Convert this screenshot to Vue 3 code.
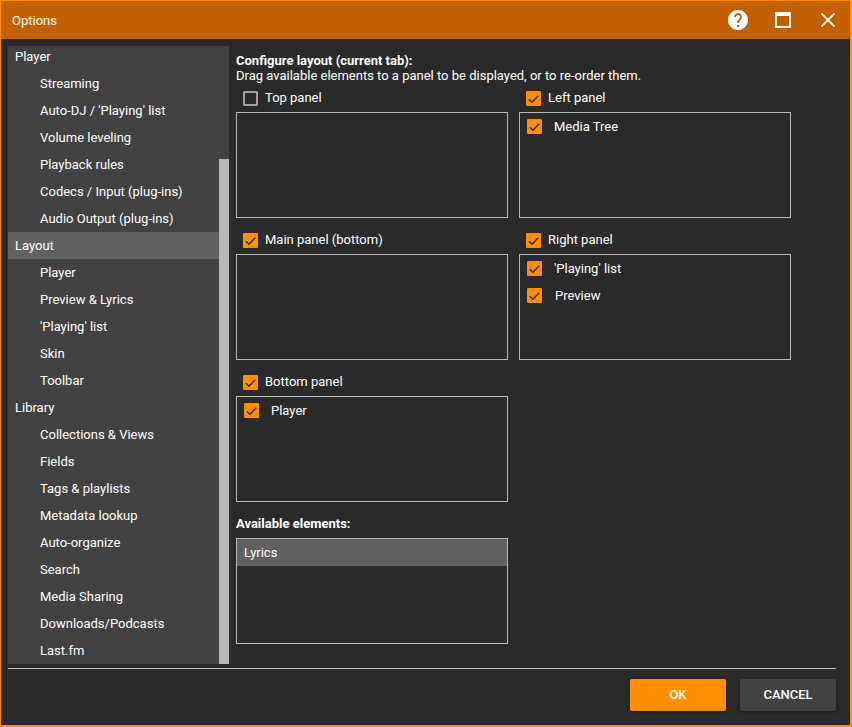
<script setup>
import { h } from 'vue'

const tree = [
  { name: 'Player', group: true },
  { name: 'Streaming' },
  { name: "Auto-DJ / 'Playing' list" },
  { name: 'Volume leveling' },
  { name: 'Playback rules' },
  { name: 'Codecs / Input (plug-ins)' },
  { name: 'Audio Output (plug-ins)' },
  { name: 'Layout', group: true, selected: true },
  { name: 'Player' },
  { name: 'Preview & Lyrics' },
  { name: "'Playing' list" },
  { name: 'Skin' },
  { name: 'Toolbar' },
  { name: 'Library', group: true },
  { name: 'Collections & Views' },
  { name: 'Fields' },
  { name: 'Tags & playlists' },
  { name: 'Metadata lookup' },
  { name: 'Auto-organize' },
  { name: 'Search' },
  { name: 'Media Sharing' },
  { name: 'Downloads/Podcasts' },
  { name: 'Last.fm' },
]

const panels = [
  { name: 'Top panel', on: false, items: [] },
  { name: 'Left panel', on: true, items: ['Media Tree'] },
  { name: 'Main panel (bottom)', on: true, items: [] },
  { name: 'Right panel', on: true, items: ["'Playing' list", 'Preview'] },
  { name: 'Bottom panel', on: true, items: ['Player'] },
]

const CheckBox = (props) =>
  h('svg', { width: 15, height: 15, viewBox: '0 0 15 15' }, props.on
    ? [
        h('rect', { width: 15, height: 15, rx: 1.2, fill: '#ff8f00' }),
        h('path', { d: 'M2.8 8.2l3.1 3L12.3 4.7', fill: 'none', stroke: '#2b2b2b', 'stroke-width': 1.4 }),
      ]
    : [h('rect', { x: 1, y: 1, width: 13, height: 13, rx: 0.5, fill: 'none', stroke: '#a3a3a3', 'stroke-width': 2 })])
CheckBox.props = ['on']
</script>

<template>
  <div class="window">
    <header class="titlebar">
      <span class="title">Options</span>
      <svg class="help" width="20" height="20" viewBox="2 2 20 20">
        <path fill="#fff" d="M12 2C6.48 2 2 6.48 2 12s4.48 10 10 10 10-4.48 10-10S17.52 2 12 2zm1 17h-2v-2h2v2zm2.07-7.75l-.9.92C13.45 12.9 13 13.5 13 15h-2v-.5c0-1.1.45-2.1 1.17-2.83l1.24-1.26c.37-.36.59-.86.59-1.41 0-1.1-.9-2-2-2s-2 .9-2 2H8c0-2.21 1.79-4 4-4s4 1.79 4 4c0 .88-.36 1.68-.93 2.25z" />
      </svg>
      <svg class="max" width="16" height="16" viewBox="0 0 16 16">
        <path fill="#fff" fill-rule="evenodd" d="M0 0h16v16H0zM2 4v10h12V4z" />
      </svg>
      <svg class="close" width="14" height="14" viewBox="0 0 14 14">
        <path d="M.6 .6l12.8 12.8M13.4 .6L.6 13.4" stroke="#fff" stroke-width="1.8" />
      </svg>
    </header>

    <div class="body">
      <nav class="sidebar">
        <ul class="tree">
          <li v-for="(n, i) in tree" :key="i" :class="{ group: n.group, selected: n.selected }">{{ n.name }}</li>
        </ul>
        <div class="track"><div class="thumb"></div></div>
      </nav>

      <main class="content">
        <div class="heading">Configure layout (current tab):</div>
        <div class="hint">Drag available elements to a panel to be displayed, or to re-order them.</div>
        <div class="panels">
          <section v-for="p in panels" :key="p.name">
            <label class="caption"><CheckBox class="check" :on="p.on" /><span>{{ p.name }}</span></label>
            <div class="box">
              <div v-for="(item, i) in p.items" :key="item" class="item" :class="{ next: i > 0 }">
                <CheckBox class="check" :on="true" /><span>{{ item }}</span>
              </div>
            </div>
          </section>
        </div>
        <div class="available">Available elements:</div>
        <div class="box"><div class="entry">Lyrics</div></div>
      </main>
    </div>

    <footer class="footer">
      <button class="btn primary">OK</button>
      <button class="btn">CANCEL</button>
    </footer>
  </div>
</template>

<style>
body {
  background: #2b2b2b;
}
</style>

<style scoped>
.window {
  box-sizing: border-box;
  width: 852px;
  height: 727px;
  display: flex;
  flex-direction: column;
  border: solid #ff8f00;
  border-width: 1px 2px 2px 1px;
  background: #2b2b2b;
  color: #fff;
  font: 13px/15px Roboto, sans-serif;
  overflow: hidden;
}
.titlebar {
  flex: none;
  height: 38px;
  display: flex;
  align-items: center;
  background: #c45f00;
  padding: 0 15px 0 11px;
}
.title {
  flex: 1;
}
.max {
  margin-left: 27px;
}
.close {
  margin-left: 30px;
}
.body {
  display: flex;
  flex: none;
  height: 618px;
  padding: 7px 0 4px 7px;
}
.sidebar {
  width: 221px;
  display: flex;
  background: #424242;
  overflow: hidden;
}
.tree {
  flex: 1;
  list-style: none;
  margin: -3px 0 0;
  padding: 0;
}
.tree li {
  height: 27px;
  line-height: 27px;
  padding-left: 32px;
  white-space: nowrap;
}
.tree .group {
  padding-left: 7px;
}
.tree .selected {
  background: #616161;
}
.track {
  width: 10px;
  display: flex;
  align-items: flex-end;
}
.thumb {
  width: 10px;
  height: 505px;
  background: #b8b8b8;
}
.content {
  padding: 7px 0 0 7px;
}
.heading,
.available {
  font-weight: 700;
}
.panels {
  display: grid;
  grid-template-columns: 272px 272px;
  column-gap: 11px;
  row-gap: 7px;
}
.check {
  flex: none;
}
.caption {
  height: 29px;
  display: flex;
  align-items: center;
  gap: 7px;
  padding-left: 7px;
}
.caption span {
  margin-top: -1px;
}
.caption .check {
  margin-top: 2px;
}
.box {
  box-sizing: border-box;
  width: 272px;
  height: 106px;
  border: 1px solid #b8b8b8;
}
.item {
  height: 27px;
  display: flex;
  align-items: center;
  gap: 12px;
  padding-left: 7px;
}
.item.next {
  gap: 13px;
}
.entry {
  height: 27px;
  line-height: 27px;
  padding-left: 7px;
  background: #616161;
}
.available {
  padding: 14px 0 7px;
}
.footer {
  flex: none;
  margin: 0 14px 0 7px;
  border-top: 1px solid #b8b8b8;
  padding-top: 10px;
  display: flex;
  justify-content: flex-end;
  gap: 14px;
}
.btn {
  width: 96px;
  height: 32px;
  border: 0;
  border-radius: 2px;
  padding: 0;
  background: #424242;
  color: #fff;
  font: 500 13px/32px Roboto, sans-serif;
  box-shadow: 0 1px 4px rgba(0, 0, 0, 0.35);
}
.primary {
  background: #ff8f00;
}
</style>
